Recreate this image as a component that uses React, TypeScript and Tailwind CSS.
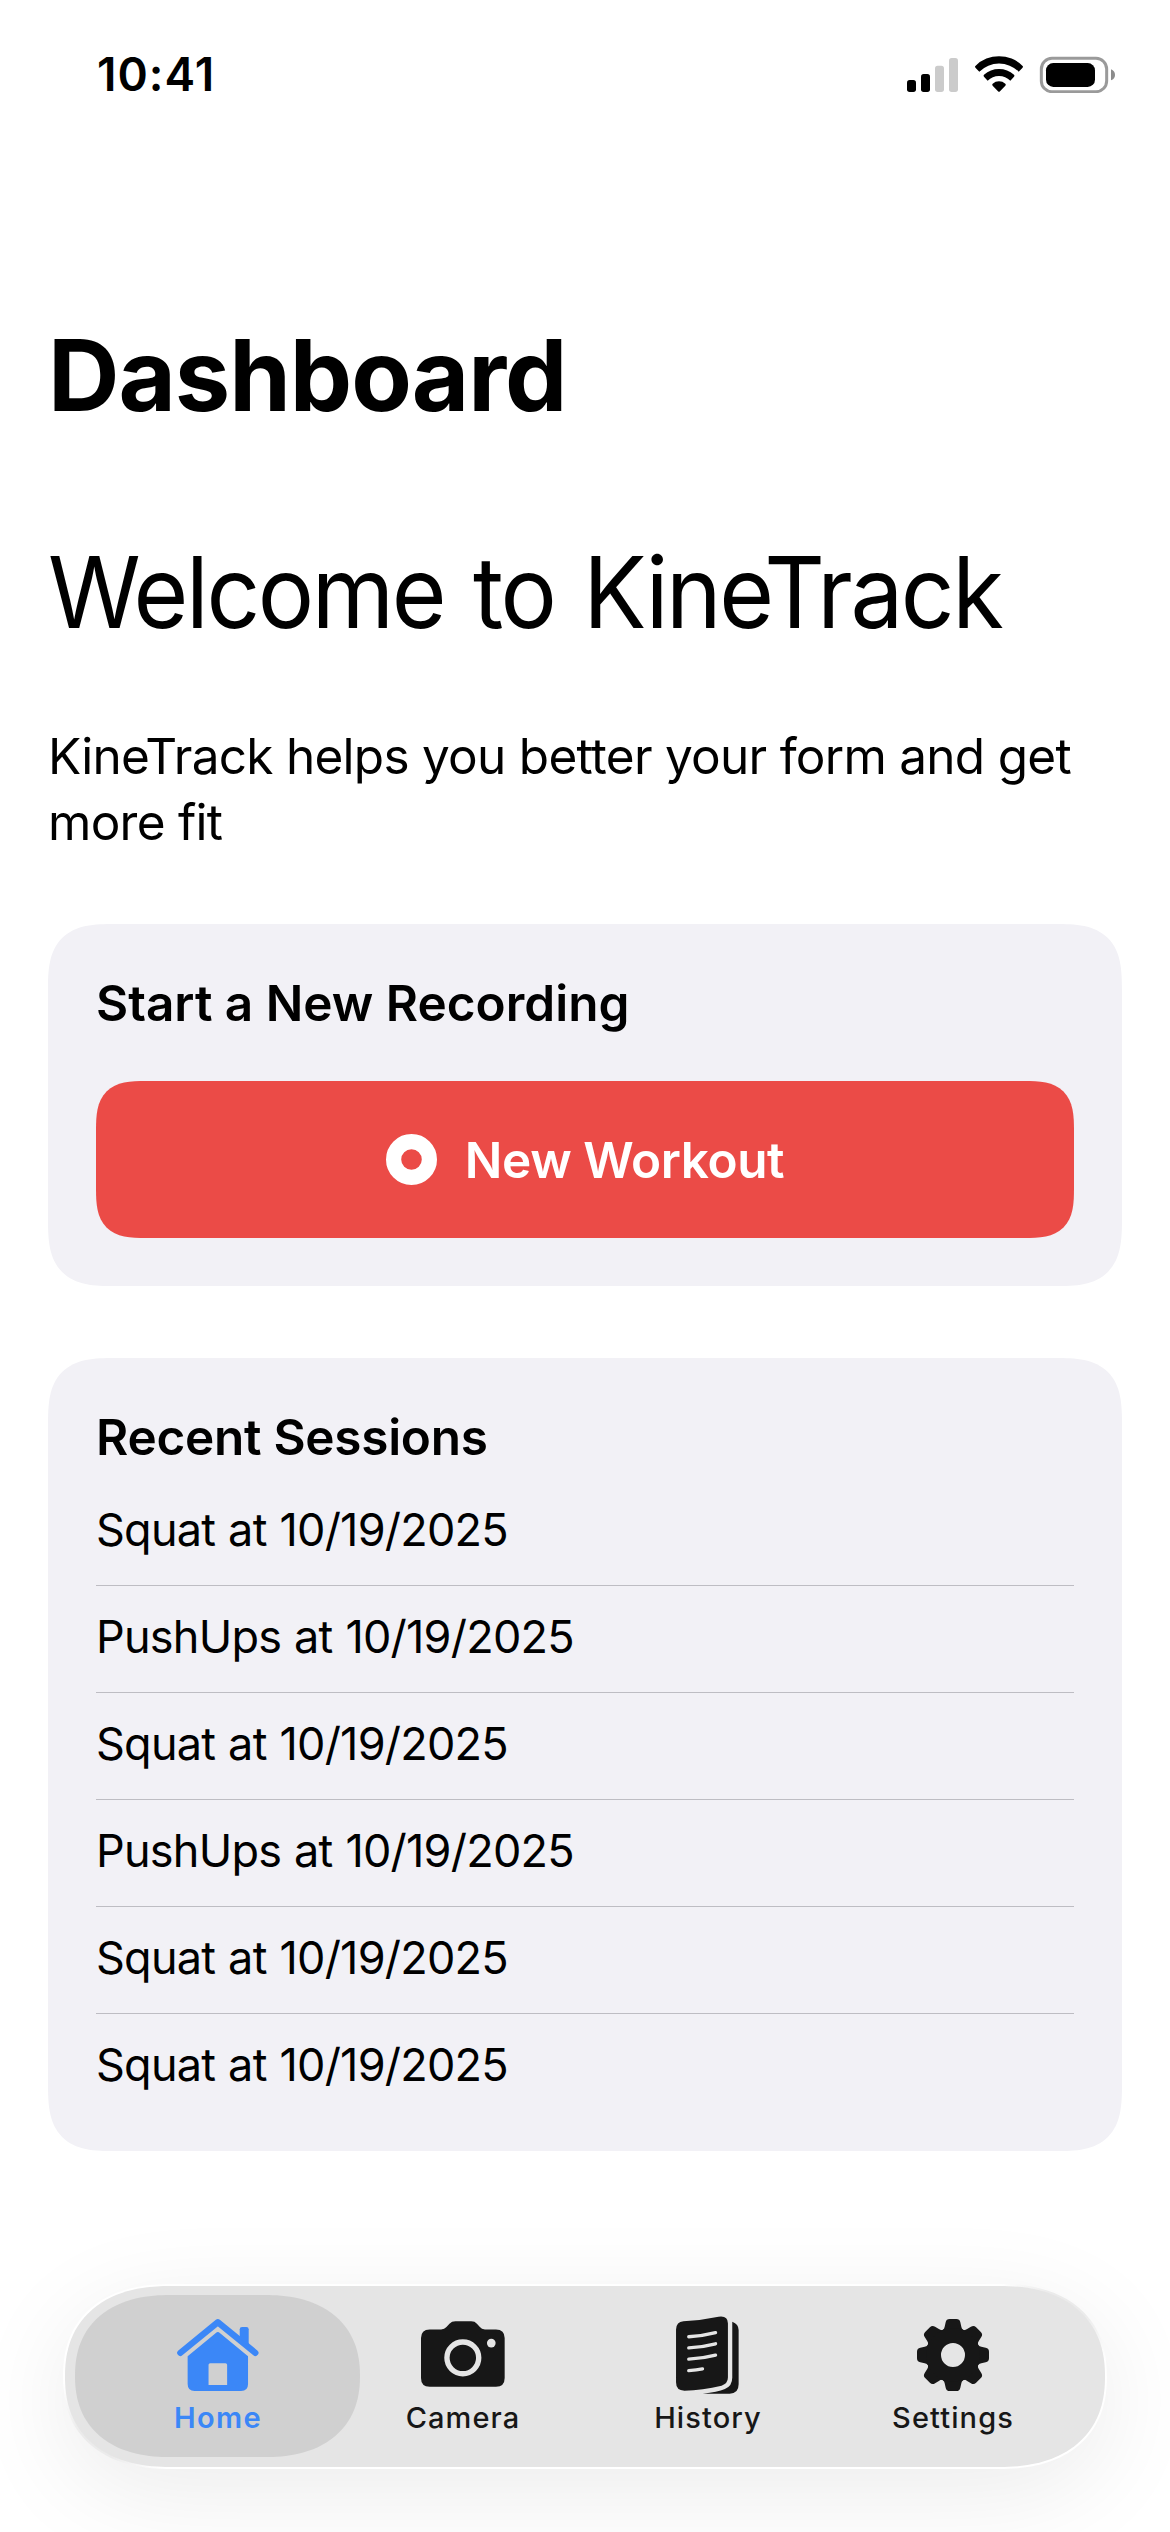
import type { ReactNode } from "react";

const sessions = [
  "Squat at 10/19/2025",
  "PushUps at 10/19/2025",
  "Squat at 10/19/2025",
  "PushUps at 10/19/2025",
  "Squat at 10/19/2025",
  "Squat at 10/19/2025",
];

function StatusIcons() {
  return (
    <svg viewBox="81 75 624 111" className="h-[37px] w-[208px]">
      <rect x="81" y="147" width="27" height="36" rx="8" />
      <rect x="123" y="129" width="27" height="54" rx="8" />
      <rect x="165" y="104" width="27" height="79" rx="8" fill="#cbcbcb" />
      <rect x="207" y="81" width="27" height="102" rx="8" fill="#cbcbcb" />
      <path d="M287 104A100 100 0 0 1 427 104Q431 107 427 111L416 122A84 84 0 0 0 298 122L287 111Q283 107 287 104Z" />
      <path d="M312 131A68 68 0 0 1 402 131Q405 134 402 137L391 149A48 48 0 0 0 323 149L312 137Q309 134 312 131Z" />
      <path d="M338 158A29 29 0 0 1 376 158Q379 161 376 164L360 181Q357 184 354 181L338 164Q335 161 338 158Z" />
      <rect x="484" y="82" width="196" height="100" rx="32" fill="none" stroke="#9a9a9a" strokeWidth="9" />
      <rect x="498" y="96" width="147" height="72" rx="22" />
      <path d="M693 115Q705 120 705 132Q705 144 693 148Z" fill="#8c8c8c" />
    </svg>
  );
}

function HomeIcon() {
  return (
    <svg viewBox="440 236 247 217" className="h-[72px] w-[82px]" fill="currentColor">
      <path d="M450 338L563 246L676 338" fill="none" stroke="currentColor" strokeWidth="19" strokeLinecap="round" strokeLinejoin="round" />
      <path d="M629 267Q629 260 636 260H649Q656 260 656 267V316L629 294Z" />
      <path
        fillRule="evenodd"
        d="M557 278Q563 273 569 278L654 348V432Q654 453 633 453H493Q472 453 472 432V348ZM540 369Q535 369 535 374V435H591V374Q591 369 586 369Z"
      />
    </svg>
  );
}

function CameraIcon() {
  return (
    <svg viewBox="126 182 251 197" className="mb-[3px] h-[66px] w-[84px]" fill="currentColor">
      <path d="M152 207H186Q196 207 202 200L211 190Q218 183 229 183H276Q287 183 293 190L302 200Q307 207 317 207H350Q376 207 376 233V352Q376 378 350 378H152Q126 378 126 352V233Q126 207 152 207Z" />
      <circle cx="251" cy="292" r="47.5" fill="none" stroke="#e5e5e5" strokeWidth="16" />
      <circle cx="336" cy="248" r="13" fill="#e5e5e5" />
    </svg>
  );
}

function HistoryIcon() {
  return (
    <svg viewBox="886 170 188 233" className="h-[78px] w-[63px]" fill="currentColor">
      <path d="M886 210Q887 188 908 186Q960 183 1013 172Q1041 168 1041 192V354Q1041 372 1022 378Q965 391 911 393Q886 393 886 368Z" />
      <path d="M1054 187Q1073 194 1073 212V374Q1073 402 1046 402H966Q1010 397 1032 388Q1054 380 1054 354Z" />
      <path
        d="M924 232Q966 230 1004 220M924 265Q966 263 1004 253M924 299Q966 297 1004 287M924 333Q948 332 965 328"
        fill="none"
        stroke="#e5e5e5"
        strokeWidth="10"
        strokeLinecap="round"
      />
    </svg>
  );
}

function SettingsIcon() {
  return (
    <svg viewBox="-108 -108 216 216" className="h-[72px] w-[72px]" fill="currentColor">
      {[0, 45, 90, 135, 180, 225, 270, 315].map((angle) => (
        <path
          key={angle}
          transform={`rotate(${angle})`}
          d="M-36 -60V-74Q-27 -74 -25 -85L-22 -98Q-20 -108 -10 -108H10Q20 -108 22 -98L25 -85Q27 -74 36 -74V-60Z"
        />
      ))}
      <circle r="58" fill="none" stroke="currentColor" strokeWidth="44" />
    </svg>
  );
}

function Tab({ icon, label, active = false }: { icon: ReactNode; label: string; active?: boolean }) {
  return (
    <button
      className={
        active
          ? "relative flex flex-1 flex-col items-center pt-[30px] text-[#3b87f7]"
          : "relative flex flex-1 flex-col items-center pt-[30px] text-[#171717]"
      }
    >
      {active && (
        <span className="absolute top-[9px] -left-5 h-[162px] w-[285px] rounded-[95px/81px] bg-[#d0d0d0] [corner-shape:superellipse(1.2)]" />
      )}
      <span className="relative flex h-[78px] items-center justify-center">{icon}</span>
      <span
        className={
          active
            ? "relative mt-[6px] pl-px text-[29px] leading-[36px] font-semibold tracking-[1.4px]"
            : "relative mt-[6px] pl-px text-[29px] leading-[36px] font-medium tracking-[1.1px]"
        }
      >
        {label}
      </span>
    </button>
  );
}

export default function App() {
  return (
    <div className="flex h-[2532px] w-[1170px] flex-col overflow-hidden bg-white font-[Inter,sans-serif] text-black">
      <header className="flex h-[148px] shrink-0 items-center justify-between pr-[55px] pl-[97px]">
        <span className="text-[46px] leading-[60px] font-semibold tracking-[1px]">10:41</span>
        <StatusIcons />
      </header>

      <main className="px-12">
        <h1 className="mt-[167px] text-[99px] leading-[120px] font-bold tracking-[-1.06px]">Dashboard</h1>
        <h2 className="mt-[97px] origin-left scale-x-95 text-[99px] leading-[120px] font-normal tracking-[-2.5px] whitespace-nowrap [word-spacing:5px]">
          Welcome to KineTrack
        </h2>
        <p className="mt-[71px] text-[49.5px] leading-[66px] tracking-[-0.73px]">
          KineTrack helps you better your form and get more fit
        </p>

        <section className="mt-[69px] rounded-[67px] bg-[#f2f1f6] px-12 pt-[49px] pb-12 [corner-shape:superellipse(1.55)]">
          <h3 className="text-[49.5px] leading-[60px] font-semibold">Start a New Recording</h3>
          <button className="mt-12 flex h-[157px] w-full items-center justify-center gap-[28px] rounded-[50px] bg-[#eb4b47] text-white [corner-shape:superellipse(1.55)]">
            <svg viewBox="0 0 51 51" className="h-[51px] w-[51px]">
              <circle cx="25.5" cy="25.5" r="17.9" fill="none" stroke="currentColor" strokeWidth="15.2" />
            </svg>
            <span className="text-[49.5px] leading-[60px] font-semibold tracking-[-0.4px]">New Workout</span>
          </button>
        </section>

        <section className="mt-[72px] rounded-[67px] bg-[#f2f1f6] px-12 pt-[49px] pb-[59px] [corner-shape:superellipse(1.55)]">
          <h3 className="text-[49.5px] leading-[60px] font-semibold tracking-[-0.27px]">Recent Sessions</h3>
          <ul className="mt-3 divide-y divide-[#bebdc3]">
            {sessions.map((session, i) => (
              <li key={i} className="pt-6 pb-7 text-[45px] leading-[54px] tracking-[-0.76px] [word-spacing:1px] last:pb-0">
                {session}
              </li>
            ))}
          </ul>
        </section>
      </main>

      <nav className="mx-[63px] mt-[133px] h-[185px] shrink-0 rounded-[107px/92px] bg-white bg-[radial-gradient(circle_70px_at_1007px_16px,#ebebeb_30%,transparent),radial-gradient(circle_70px_at_30px_163px,#ebebeb_30%,transparent)] p-[2px] shadow-[0_24px_100px_rgba(0,0,0,0.08)] [corner-shape:superellipse(1.2)]">
        <div className="flex h-full rounded-[105px/90px] bg-[#e5e5e5] px-[30px] [corner-shape:superellipse(1.2)]">
          <Tab active icon={<HomeIcon />} label="Home" />
          <Tab icon={<CameraIcon />} label="Camera" />
          <Tab icon={<HistoryIcon />} label="History" />
          <Tab icon={<SettingsIcon />} label="Settings" />
        </div>
      </nav>
    </div>
  );
}
